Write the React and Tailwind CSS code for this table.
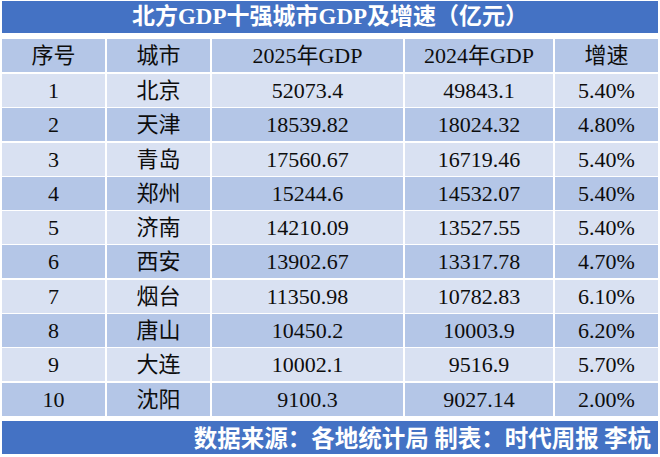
const rows = [
  ['1', '北京', '52073.4', '49843.1', '5.40%'],
  ['2', '天津', '18539.82', '18024.32', '4.80%'],
  ['3', '青岛', '17560.67', '16719.46', '5.40%'],
  ['4', '郑州', '15244.6', '14532.07', '5.40%'],
  ['5', '济南', '14210.09', '13527.55', '5.40%'],
  ['6', '西安', '13902.67', '13317.78', '4.70%'],
  ['7', '烟台', '11350.98', '10782.83', '6.10%'],
  ['8', '唐山', '10450.2', '10003.9', '6.20%'],
  ['9', '大连', '10002.1', '9516.9', '5.70%'],
  ['10', '沈阳', '9100.3', '9027.14', '2.00%'],
]

const headers = ['序号', '城市', '2025年GDP', '2024年GDP', '增速']

const serif = "font-['Liberation_Serif','Noto_Sans_CJK_SC',serif]"

function Row({ cells, dark, tall }) {
  return (
    <div
      className={`grid grid-cols-[103px_103px_191px_148px_103px] gap-x-[2px] ${tall ? 'h-[33px]' : 'h-[32.3px]'}`}
    >
      {cells.map((c, i) => (
        <div
          key={i}
          className={`flex items-center justify-center text-[22px] text-[#0d0d0d] ${serif} ${dark ? 'bg-[#b4c6e7]' : 'bg-[#d9e1f2]'}`}
        >
          {c}
        </div>
      ))}
    </div>
  )
}

export default function App() {
  return (
    <div className="w-[660px] h-[457px] bg-white pt-[1px] px-[2px] flex flex-col">
      <div className={`h-[32px] bg-[#4472c4] flex items-center justify-center text-white font-bold text-[23px] ${serif}`}>
        北方GDP十强城市GDP及增速（亿元）
      </div>

      <div className="mt-[6px] flex flex-col gap-y-[2px]">
        <Row cells={headers} dark tall />
        {rows.map((r, i) => (
          <Row key={r[0]} cells={r} dark={i % 2 === 1} />
        ))}
      </div>

      <div className="mt-[6px] h-[33px] bg-[#4472c4] flex items-center justify-end pr-[7px] text-white font-bold text-[23.5px] font-['Noto_Sans_CJK_SC',sans-serif]">
        数据来源：各地统计局 制表：时代周报 李杭
      </div>
    </div>
  )
}
